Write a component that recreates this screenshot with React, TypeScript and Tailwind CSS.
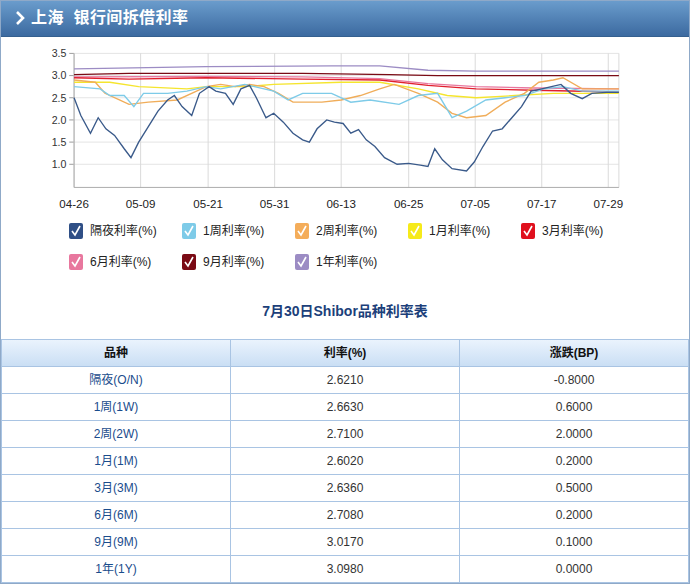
import React from "react";

const toY = (v: number) => 54 + (3.5 - v) * 46;
const series: { c: string; p: number[][] }[] = [
  { c: "#9c8cc4", p: [[63,3.15],[200,3.2],[330,3.22],[380,3.22],[430,3.12],[480,3.1],[560,3.1],[628,3.1]] },
  { c: "#7a0a14", p: [[63,3.02],[120,3.05],[200,3.05],[300,3.05],[390,3.02],[440,3.0],[500,3.0],[628,3.0]] },
  { c: "#e8779e", p: [[63,2.97],[200,2.98],[300,2.97],[380,2.93],[430,2.82],[480,2.75],[540,2.72],[628,2.7]] },
  { c: "#e0202e", p: [[63,2.95],[120,2.92],[200,2.95],[300,2.92],[380,2.9],[430,2.78],[480,2.7],[540,2.67],[628,2.63]] },
  { c: "#f5e52e", p: [[63,2.85],[100,2.85],[130,2.75],[180,2.7],[200,2.75],[240,2.75],[270,2.8],[340,2.85],[380,2.85],[420,2.7],[450,2.55],[480,2.5],[520,2.55],[560,2.6],[628,2.6]] },
  { c: "#f0ad5a", p: [[63,2.9],[85,2.85],[95,2.6],[110,2.45],[120,2.35],[140,2.4],[170,2.45],[190,2.65],[200,2.75],[215,2.8],[230,2.75],[245,2.8],[260,2.75],[275,2.6],[290,2.4],[320,2.4],[340,2.45],[360,2.55],[380,2.7],[395,2.8],[420,2.6],[440,2.4],[455,2.15],[470,2.05],[490,2.1],[510,2.4],[530,2.6],[545,2.85],[560,2.9],[570,2.95],[590,2.7],[628,2.7]] },
  { c: "#7ecbe8", p: [[63,2.75],[90,2.7],[100,2.55],[115,2.55],[125,2.3],[135,2.6],[160,2.6],[180,2.65],[200,2.75],[215,2.7],[240,2.8],[250,2.75],[270,2.65],[285,2.45],[300,2.6],[330,2.6],[350,2.4],[370,2.45],[400,2.35],[420,2.55],[440,2.6],[455,2.05],[470,2.2],[490,2.45],[510,2.5],[530,2.55],[550,2.7],[570,2.75],[590,2.65],[628,2.65]] },
  { c: "#3a5a8a", p: [[63,2.5],[70,2.1],[80,1.7],[88,2.05],[96,1.8],[105,1.65],[115,1.35],[122,1.15],[130,1.5],[140,1.85],[150,2.2],[160,2.45],[167,2.55],[175,2.3],[185,2.1],[193,2.6],[203,2.75],[210,2.65],[220,2.6],[228,2.35],[236,2.7],[245,2.78],[252,2.5],[262,2.05],[270,2.15],[280,1.95],[290,1.7],[300,1.55],[307,1.5],[315,1.8],[325,2.0],[333,1.95],[342,1.92],[350,1.7],[358,1.78],[366,1.55],[375,1.4],[385,1.15],[398,1.0],[410,1.02],[422,0.98],[430,0.95],[437,1.35],[445,1.1],[455,0.9],[470,0.85],[478,1.05],[487,1.4],[497,1.75],[507,1.8],[517,2.05],[527,2.3],[537,2.65],[548,2.7],[558,2.75],[568,2.8],[578,2.6],[590,2.48],[600,2.6],[615,2.62],[628,2.62]] },
];
const dates = [["04-26",63],["05-09",132],["05-21",202],["05-31",271],["06-13",340],["06-25",410],["07-05",479],["07-17",548],["07-29",617]] as const;
const legend = [
  ["隔夜利率(%)", "#2f4f86"], ["1周利率(%)", "#7ecbe8"], ["2周利率(%)", "#f4ad5a"], ["1月利率(%)", "#f6ea1a"], ["3月利率(%)", "#e0101e"],
  ["6月利率(%)", "#e8779e"], ["9月利率(%)", "#7a0a14"], ["1年利率(%)", "#9c8cc4"],
];
const rows = [
  ["隔夜(O/N)","2.6210","-0.8000"],["1周(1W)","2.6630","0.6000"],["2周(2W)","2.7100","2.0000"],["1月(1M)","2.6020","0.2000"],
  ["3月(3M)","2.6360","0.5000"],["6月(6M)","2.7080","0.2000"],["9月(9M)","3.0170","0.1000"],["1年(1Y)","3.0980","0.0000"],
];

function Check({ color }: { color: string }) {
  return (
    <span className="inline-flex w-[14px] h-[16px] rounded-[2px] items-center justify-center" style={{ background: color }}>
      <svg width="12" height="12" viewBox="0 0 12 12"><path d="M2 6 L5 10 L10 1" stroke="#fff" strokeWidth="1.6" fill="none" /></svg>
    </span>
  );
}

export default function App() {
  return (
    <div className="w-[693px] h-[584px] bg-white overflow-hidden" style={{ fontFamily: "'Liberation Sans','Noto Sans CJK SC',sans-serif" }}>
      <div className="w-[690px] h-[584px] border border-[#8fa9c8] flex flex-col">
        <div className="h-[37px] bg-gradient-to-b from-[#6a9ccc] to-[#3c6aa0] flex items-center px-[14px] text-white border-b border-[#35608f]">
          <svg width="10" height="14" viewBox="0 0 10 14" className="mr-[6px]"><path d="M2 1 L8 7 L2 13" stroke="#fff" strokeWidth="2.6" fill="none" /></svg>
          <span className="text-[16px] font-bold tracking-wide">上海&nbsp; 银行间拆借利率</span>
        </div>
        <svg width="690" height="188" viewBox="0 37 690 188" className="block">
          {[3.5,3.0,2.5,2.0,1.5,1.0].map(v => (
            <g key={v}>
              <line x1="58" x2="63" y1={toY(v)} y2={toY(v)} stroke="#999" />
              <line x1="63" x2="628" y1={toY(v)} y2={toY(v)} stroke="#e4e4e4" />
              <text x="55" y={toY(v) + 4} fontSize="11" textAnchor="end" fill="#333">{v.toFixed(1)}</text>
            </g>
          ))}
          {dates.map(([d, x]) => (
            <g key={d}>
              <line x1={x} x2={x} y1="54" y2="193" stroke="#d8d8d8" />
              <text x={x} y="214" fontSize="12" textAnchor="middle" fill="#222">{d}</text>
            </g>
          ))}
          <line x1="63" x2="63" y1="54" y2="193" stroke="#aaa" />
          <line x1="628" x2="628" y1="54" y2="193" stroke="#d8d8d8" />
          <line x1="63" x2="628" y1="193" y2="193" stroke="#aaa" />
          {series.map((s, i) => (
            <polyline key={i} points={s.p.map(([x, v]) => `${x},${toY(v)}`).join(" ")} fill="none" stroke={s.c} strokeWidth="1.4" />
          ))}
        </svg>
        <div className="pl-[68px] flex flex-col gap-[13px] text-[12px] text-[#222] mt-[4px]">
          {[legend.slice(0, 5), legend.slice(5)].map((r, i) => (
            <div key={i} className="flex">
              {r.map(([t, c]) => (
                <div key={t} className="w-[113px] flex items-center gap-[7px]"><Check color={c} /><span>{t}</span></div>
              ))}
            </div>
          ))}
        </div>
        <div className="text-center text-[14px] font-bold text-[#1c3f7a] mt-[30px] mb-[17px]">7月30日Shibor品种利率表</div>
        <table className="w-full border-collapse text-[12px]">
          <thead>
            <tr className="h-[27px] bg-gradient-to-b from-[#eaf3fd] to-[#c9def4]">
              {["品种","利率(%)","涨跌(BP)"].map(h => (
                <th key={h} className="border border-[#a9c4e3] font-bold text-[#111] w-1/3">{h}</th>
              ))}
            </tr>
          </thead>
          <tbody>
            {rows.map(r => (
              <tr key={r[0]} className="h-[27px]">
                <td className="border border-[#a9c4e3] text-center text-[#1a4c8c]">{r[0]}</td>
                <td className="border border-[#a9c4e3] text-center text-[#333]">{r[1]}</td>
                <td className="border border-[#a9c4e3] text-center text-[#333]">{r[2]}</td>
              </tr>
            ))}
          </tbody>
        </table>
      </div>
    </div>
  );
}
